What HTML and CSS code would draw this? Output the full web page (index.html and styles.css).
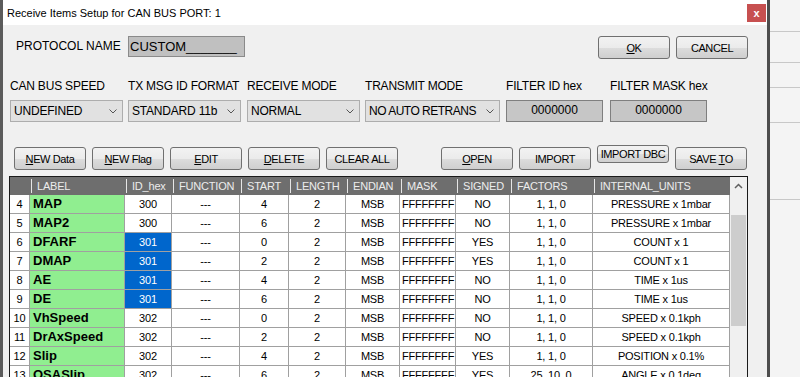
FILE: index.html
```html
<!DOCTYPE html>
<html>
    <head>
        <title>Receive Items Setup</title>
        <link rel="stylesheet" href="styles.css">
    </head>
    <body>
        <div class="desk">
            <div class="window">
                <div class="titlebar">
                    <span class="title">Receive Items Setup for CAN BUS PORT: 1</span>
                    <span class="close">x</span>
                </div>

                <div class="top-row">
                    <span class="proto-label">PROTOCOL NAME</span>
                    <div class="proto-box">CUSTOM_______</div>
                    <div class="top-buttons">
                        <button class="btn"><u>O</u>K</button>
                        <button class="btn">CANCEL</button>
                    </div>
                </div>

                <div class="fields">
                    <div class="field">
                        <label>CAN BUS SPEED</label>
                        <div class="combo">UNDEFINED <svg width="8" height="5" viewBox="0 0 8 5"><polyline points="0.5,0.5 4,4 7.5,0.5" /></svg></div>
                    </div>
                    <div class="field">
                        <label>TX MSG ID FORMAT</label>
                        <div class="combo">STANDARD 11b <svg width="8" height="5" viewBox="0 0 8 5"><polyline points="0.5,0.5 4,4 7.5,0.5" /></svg></div>
                    </div>
                    <div class="field">
                        <label>RECEIVE MODE</label>
                        <div class="combo">NORMAL <svg width="8" height="5" viewBox="0 0 8 5"><polyline points="0.5,0.5 4,4 7.5,0.5" /></svg></div>
                    </div>
                    <div class="field">
                        <label>TRANSMIT MODE</label>
                        <div class="combo wide">NO AUTO RETRANS <svg width="8" height="5" viewBox="0 0 8 5"><polyline points="0.5,0.5 4,4 7.5,0.5" /></svg></div>
                    </div>
                    <div class="field">
                        <label>FILTER ID hex</label>
                        <div class="hexbox">0000000</div>
                    </div>
                    <div class="field">
                        <label>FILTER MASK hex</label>
                        <div class="hexbox">0000000</div>
                    </div>
                </div>

                <div class="actions">
                    <div class="group">
                        <button class="btn"><u>N</u>EW Data</button>
                        <button class="btn"><u>N</u>EW Flag</button>
                        <button class="btn"><u>E</u>DIT</button>
                        <button class="btn"><u>D</u>ELETE</button>
                        <button class="btn">CLEAR ALL</button>
                    </div>
                    <div class="group">
                        <button class="btn"><u>O</u>PEN</button>
                        <button class="btn">IMPORT</button>
                        <button class="btn short">IMPORT DBC</button>
                        <button class="btn">SAVE <u>T</u>O</button>
                    </div>
                </div>

                <div class="grid">
                    <div class="rows">
                        <div class="head">
                            <div class="hc"></div>
                            <div class="hc"><span>LABEL</span></div>
                            <div class="hc"><span>ID_hex</span></div>
                            <div class="hc"><span>FUNCTION</span></div>
                            <div class="hc"><span>START</span></div>
                            <div class="hc"><span>LENGTH</span></div>
                            <div class="hc"><span>ENDIAN</span></div>
                            <div class="hc"><span>MASK</span></div>
                            <div class="hc"><span>SIGNED</span></div>
                            <div class="hc"><span>FACTORS</span></div>
                            <div class="hc"><span>INTERNAL_UNITS</span></div>
                        </div>
                        <div id="body"></div>
                    </div>
                    <div class="vscroll">
                        <div class="arrow"><svg width="9" height="6" viewBox="0 0 9 6"><polyline points="1,5 4.5,1.5 8,5" /></svg></div>
                        <div class="thumb"></div>
                    </div>
                </div>
            </div>
            <div class="side">
                <div class="line l1"></div>
                <div class="line l2"></div>
                <div class="line l3"></div>
                <div class="line l4"></div>
                <div class="line l5"></div>
            </div>
        </div>
        <script type="text/javascript">
            let items = [
                [4, 'MAP', '300', false, 4, 'NO', '1, 1, 0', 'PRESSURE x 1mbar'],
                [5, 'MAP2', '300', false, 6, 'NO', '1, 1, 0', 'PRESSURE x 1mbar'],
                [6, 'DFARF', '301', true, 0, 'YES', '1, 1, 0', 'COUNT x 1'],
                [7, 'DMAP', '301', true, 2, 'YES', '1, 1, 0', 'COUNT x 1'],
                [8, 'AE', '301', true, 4, 'NO', '1, 1, 0', 'TIME x 1us'],
                [9, 'DE', '301', true, 6, 'NO', '1, 1, 0', 'TIME x 1us'],
                [10, 'VhSpeed', '302', false, 0, 'NO', '1, 1, 0', 'SPEED x 0.1kph'],
                [11, 'DrAxSpeed', '302', false, 2, 'NO', '1, 1, 0', 'SPEED x 0.1kph'],
                [12, 'Slip', '302', false, 4, 'YES', '1, 1, 0', 'POSITION x 0.1%'],
                [13, 'OSASlip', '302', false, 6, 'YES', '25, 10, 0', 'ANGLE x 0.1deg']
            ];
            let body = document.getElementById('body');

            items.forEach((x) => {
                body.innerHTML += `<div class="row">
                    <div>${x[0]}</div>
                    <div class="lbl">${x[1]}</div>
                    <div class="${x[3] ? 'sel' : ''}">${x[2]}</div>
                    <div>---</div>
                    <div>${x[4]}</div>
                    <div>2</div>
                    <div>MSB</div>
                    <div class="mask">FFFFFFFF</div>
                    <div>${x[5]}</div>
                    <div>${x[6]}</div>
                    <div>${x[7]}</div>
                </div>`;
            });
        </script>
    </body>
</html>
```

FILE: styles.css
```css
body {
    margin: 0;
    width: 800px;
    height: 377px;
    overflow: hidden;
    background: #5b5b5b;
    font-family: 'Liberation Sans', Arial, sans-serif;
    color: #000;
}

.desk {
    display: flex;
    height: 377px;
}

.window {
    margin-left: 3px;
    width: 764px;
    background: #f0f0f0;
    display: flex;
    flex-direction: column;
}

.titlebar {
    height: 25px;
    flex-shrink: 0;
    background: #fff;
    display: flex;
    justify-content: space-between;
    align-items: flex-start;
    padding: 0 1px 0 4px;
}

.title {
    font-size: 11px;
    line-height: 26px;
}

.close {
    width: 19px;
    height: 18px;
    margin-top: 4px;
    background: #c75050;
    color: #fff;
    font-size: 11px;
    font-weight: bold;
    display: flex;
    align-items: center;
    justify-content: center;
}

/* protocol row */

.top-row {
    display: flex;
    align-items: flex-start;
    margin-top: 11px;
    padding: 0 19px 0 13px;
}

.proto-label {
    width: 112px;
    font-size: 12px;
    line-height: 20px;
}

.proto-box {
    width: 117px;
    height: 21px;
    box-sizing: border-box;
    border: 1px solid #8a8a8a;
    background: #c0c0c0;
    font-size: 13px;
    line-height: 19px;
    padding-left: 1px;
    white-space: nowrap;
    overflow: hidden;
}

.top-buttons {
    margin-left: auto;
    display: flex;
    gap: 6px;
}

.btn {
    width: 72px;
    height: 23px;
    box-sizing: border-box;
    border: 1px solid #707070;
    border-radius: 3px;
    background: linear-gradient(#f2f2f2 0%, #ebebeb 50%, #dddddd 50%, #cfcfcf 100%);
    font-family: 'Liberation Sans', Arial, sans-serif;
    font-size: 11px;
    letter-spacing: -0.4px;
    color: #000;
    padding: 0;
    white-space: nowrap;
}

.btn u {
    text-decoration-thickness: 1px;
}

/* settings row */

.fields {
    display: grid;
    grid-template-columns: 118px 119px 118px 141px 104px 97px;
    margin-top: 20px;
    padding-left: 7px;
}

.field label {
    display: block;
    font-size: 12px;
    line-height: 14px;
    letter-spacing: -0.2px;
    margin-bottom: 7px;
    white-space: nowrap;
}

.combo {
    width: 113px;
    height: 22px;
    box-sizing: border-box;
    border: 1px solid #adadad;
    background: #e1e1e1;
    font-size: 12px;
    letter-spacing: -0.2px;
    display: flex;
    align-items: center;
    justify-content: space-between;
    padding: 0 5px 0 3px;
    white-space: nowrap;
}

.combo.wide {
    width: 135px;
    letter-spacing: -0.5px;
}

.combo svg polyline {
    fill: none;
    stroke: #555;
    stroke-width: 1;
}

.hexbox {
    width: 97px;
    height: 22px;
    box-sizing: border-box;
    border: 1px solid #7f7f7f;
    background: #c6c6c6;
    font-size: 12px;
    line-height: 19px;
    text-align: center;
}

/* action buttons */

.actions {
    display: flex;
    justify-content: space-between;
    margin-top: 25px;
    padding: 0 20px 0 11px;
}

.group {
    display: flex;
    align-items: flex-start;
    gap: 6px;
}

.btn.short {
    height: 18px;
    margin-top: -2px;
}

/* items grid */

.grid {
    display: flex;
    margin: 6px 0 0 6px;
    width: 739px;
    box-sizing: border-box;
    border: 1px solid #1a1a1a;
    border-bottom: 0;
    flex: 1;
}

.rows {
    width: 720px;
}

.head,
.row {
    display: grid;
    grid-template-columns: 20px 95px 47px 68px 49px 57px 54px 56px 54px 83px 137px;
}

.head {
    height: 18px;
    background: #6e6e6e;
    color: #ececec;
    font-size: 11px;
    letter-spacing: -0.2px;
}

.hc {
    display: flex;
    align-items: center;
    padding-left: 1px;
    white-space: nowrap;
    overflow: hidden;
}

.hc span {
    border-left: 1px solid #e6e6e6;
    padding-left: 5px;
    line-height: 14px;
}

.row {
    height: 19px;
    box-sizing: border-box;
    border-bottom: 1px solid #a0a0a0;
    background: #fff;
    font-size: 11px;
    letter-spacing: -0.2px;
}

.row div {
    border-right: 1px solid #a0a0a0;
    text-align: center;
    line-height: 18px;
    white-space: nowrap;
    overflow: hidden;
}

.row .lbl {
    background: #90ee90;
    text-align: left;
    padding-left: 3px;
    font-size: 13px;
    font-weight: bold;
    letter-spacing: 0;
}

.row .sel {
    background: #0066cc;
    color: #fff;
}

.row .mask {
    text-align: left;
    padding-left: 2px;
}

.vscroll {
    width: 17px;
    background: #f0f0f0;
}

.arrow {
    height: 17px;
    display: flex;
    align-items: center;
    justify-content: center;
}

.arrow polyline {
    fill: none;
    stroke: #606060;
    stroke-width: 1.5;
}

.thumb {
    margin: 21px 1px 0 1px;
    height: 111px;
    background: #cdcdcd;
}

/* window behind */

.side {
    flex: 1;
    border-left: 3px solid #4d4d4d;
    background: #f4f4f4;
    display: flex;
    flex-direction: column;
}

.line {
    border-bottom: 1px solid #c8c8c8;
}

.l1 {
    height: 31px;
}

.l2 {
    height: 30px;
}

.l3 {
    height: 24px;
}

.l4 {
    height: 34px;
}

.l5 {
    height: 76px;
}
```
